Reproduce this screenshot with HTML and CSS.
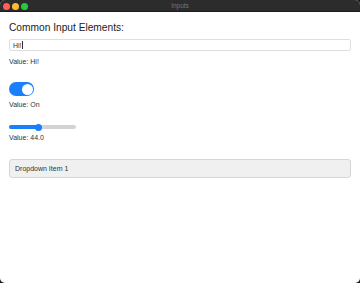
FILE: index.html
```html
<!DOCTYPE html>
<html>
<head>
<meta charset="utf-8">
<link rel="stylesheet" href="styles.css">
</head>
<body>
<div class="window">
  <div class="titlebar">
    <div class="lights">
      <span class="light red"></span>
      <span class="light yellow"></span>
      <span class="light green"></span>
    </div>
    <div class="title">Inputs</div>
  </div>
  <div class="content">
    <h1 class="heading">Common Input Elements:</h1>
    <div class="textfield"><span>Hi!</span><span class="caret"></span></div>
    <div class="value v-text">Value: Hi!</div>
    <div class="toggle"><span class="knob"></span></div>
    <div class="value v-toggle">Value: On</div>
    <div class="slider">
      <div class="fill" style="width: 44%"></div>
      <div class="thumb" style="left: 44%"></div>
    </div>
    <div class="value v-slider">Value: 44.0</div>
    <div class="dropdown">Dropdown Item 1</div>
  </div>
</div>
</body>
</html>
```
FILE: styles.css
```css
* { box-sizing: border-box; }
html, body { margin: 0; padding: 0; background: #1a1a1a; }
body { width: 360px; height: 283px; overflow: hidden; font-family: "Liberation Sans", Arial, sans-serif; }
.window {
  width: 360px; height: 283px; background: #fff;
  border-radius: 5px; overflow: hidden;
  display: flex; flex-direction: column;
}
.titlebar {
  height: 12px; background: #2c2c2c; position: relative;
  display: flex; align-items: center; justify-content: center;
  border-bottom: 1px solid #1c1c1c;
}
.lights { position: absolute; left: 2.5px; top: 2.5px; display: flex; gap: 2px; }
.light { width: 7px; height: 7px; border-radius: 50%; display: block; }
.red { background: #fe5f57; }
.yellow { background: #febc2e; }
.green { background: #28c840; }
.title { color: #767676; font-size: 6.5px; }
.content { padding: 0 9px; display: flex; flex-direction: column; }
.heading { margin: 9px 0 0; font-size: 10.2px; font-weight: normal; color: #222; line-height: 14px; }
.textfield {
  margin-top: 4px; height: 12px; border: 1px solid #dedede; border-radius: 2px;
  font-size: 7px; color: #333; padding-left: 3px; display: flex; align-items: center;
}
.caret { width: 1px; height: 8px; background: #333; margin-left: 0.5px; }
.value { font-size: 7px; color: #333; line-height: 9px; }
.v-text { margin-top: 6px; }
.toggle {
  margin-top: 16px; width: 25px; height: 14px; border-radius: 7px; background: #1a7ffb;
  position: relative;
}
.knob { position: absolute; right: 1.5px; top: 1.5px; width: 11px; height: 11px; border-radius: 50%; background: #fff; }
.v-toggle { margin-top: 4px; }
.slider { margin-top: 16px; width: 67px; height: 4px; border-radius: 2px; background: #d3d3d3; position: relative; }
.fill { height: 4px; border-radius: 2px; background: #1a7ffb; }
.thumb { position: absolute; top: -1.5px; width: 7px; height: 7px; margin-left: -3.5px; border-radius: 50%; background: #1a7ffb; }
.v-slider { margin-top: 4px; }
.dropdown {
  margin-top: 17px; height: 19px; background: #f0f0f0; border: 1px solid #d6d6d6; border-radius: 3px;
  font-size: 7px; color: #333; padding-left: 5px; display: flex; align-items: center;
}
```
